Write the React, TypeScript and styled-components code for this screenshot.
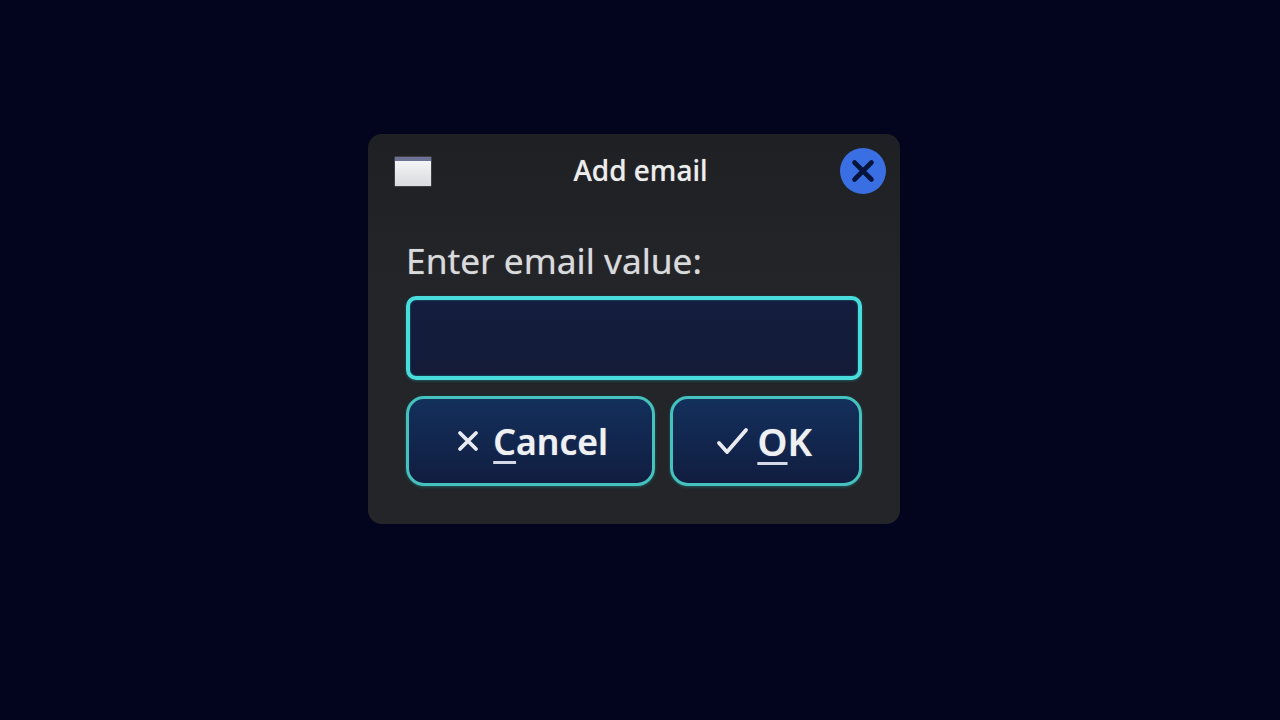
import React from "react";
import styled, { createGlobalStyle } from "styled-components";

const Global = createGlobalStyle`
  html, body { margin: 0; height: 100%; background: #02051d; }
  #root { height: 100%; }
`;

const Page = styled.div`
  width: 1280px;
  height: 720px;
  padding: 134px 0 0 368px;
  box-sizing: border-box;
  background: #02051d;
  font-family: "Noto Sans", sans-serif;
`;

const Dialog = styled.div`
  width: 532px;
  height: 390px;
  box-sizing: border-box;
  background: linear-gradient(#1f2024, #232529 40%);
  border-radius: 14px;
  display: flex;
  flex-direction: column;
  padding: 14px 14px 0 27px;
`;

const TitleBar = styled.div`
  height: 46px;
  display: flex;
  align-items: center;
  justify-content: space-between;
`;

const WindowIcon = styled.div`
  width: 36px;
  height: 29px;
  margin-top: 1px;
  box-sizing: border-box;
  border-top: 4px solid #6d7196;
  background: linear-gradient(#f4f5f7, #d9dadd);
  box-shadow: 0 0 1px #d9dadd;
`;

const Title = styled.div`
  flex: 1;
  text-align: center;
  padding-left: 10px;
  font-size: 28px;
  font-weight: 500;
  color: #eceded;
  line-height: 44px;
  text-shadow: 0 0 1px #eceded80;
  transform: translateY(-1px);
`;

const CloseButton = styled.button`
  width: 46px;
  height: 46px;
  padding: 0;
  border: none;
  border-radius: 50%;
  background: #3a6fe4;
  display: flex;
  align-items: center;
  justify-content: center;
`;

const Body = styled.div`
  margin: 0 24px 0 11px;
  display: flex;
  flex-direction: column;
`;

const Label = styled.div`
  margin-top: 41px;
  height: 50px;
  font-size: 35.3px;
  line-height: 50px;
  color: #d9dadb;
  text-shadow: 0 0 1px #d9dadb90;
`;

const Input = styled.div`
  margin-top: 11px;
  height: 84px;
  box-sizing: border-box;
  border: 4px solid #49dcdc;
  border-radius: 10px;
  background: linear-gradient(#141d3d, #131b39);
  box-shadow: 0 1px 3px #1f8f9080, inset 0 0 2px #1f8f90;
`;

const Actions = styled.div`
  margin-top: 16px;
  display: flex;
  gap: 15px;
`;

const Button = styled.button<{ $width: number; $gap: number; $left: number; $right: number; $size: number }>`
  width: ${(p) => p.$width}px;
  height: 90px;
  box-sizing: border-box;
  border: 3px solid #45c2bd;
  border-radius: 18px;
  background: linear-gradient(#13305c, #111d40);
  color: #eef0f2;
  font-family: inherit;
  font-size: ${(p) => p.$size}px;
  font-weight: 600;
  display: flex;
  align-items: center;
  justify-content: center;
  gap: ${(p) => p.$gap}px;
  padding: 0 ${(p) => p.$right}px 0 ${(p) => p.$left}px;
  box-shadow: 0 1px 3px #1f8f9080;
  text-shadow: 0 0 1px #eef0f290;
`;

const Key = styled.span`
  text-decoration: underline;
  text-decoration-thickness: 2.5px;
  text-underline-offset: 6px;
  text-decoration-color: #d5d9e6;
`;

export default function App() {
  return (
    <Page>
      <Global />
      <Dialog>
        <TitleBar>
          <WindowIcon />
          <Title>Add email</Title>
          <CloseButton aria-label="Close">
            <svg width="24" height="24" viewBox="0 0 24 24">
              <path d="M3.5 3.5 L20.5 20.5 M20.5 3.5 L3.5 20.5" stroke="#06133a" strokeWidth="4.6" strokeLinecap="round" />
            </svg>
          </CloseButton>
        </TitleBar>
        <Body>
          <Label>Enter email value:</Label>
          <Input />
          <Actions>
            <Button $width={250} $gap={14} $left={4} $right={0} $size={35.5}>
              <svg width="22" height="22" viewBox="0 0 22 22">
                <path d="M3 3 L19 19 M19 3 L3 19" stroke="#e9ebf0" strokeWidth="3.8" strokeLinecap="round" />
              </svg>
              <span><Key>C</Key>ancel</span>
            </Button>
            <Button $width={192} $gap={8} $left={0} $right={4} $size={38}>
              <svg width="33" height="28" viewBox="0 0 33 28">
                <path d="M3 16 L11 25 L30 3" fill="none" stroke="#e9ebf0" strokeWidth="3.8" strokeLinecap="round" strokeLinejoin="round" />
              </svg>
              <span><Key>O</Key>K</span>
            </Button>
          </Actions>
        </Body>
      </Dialog>
    </Page>
  );
}
